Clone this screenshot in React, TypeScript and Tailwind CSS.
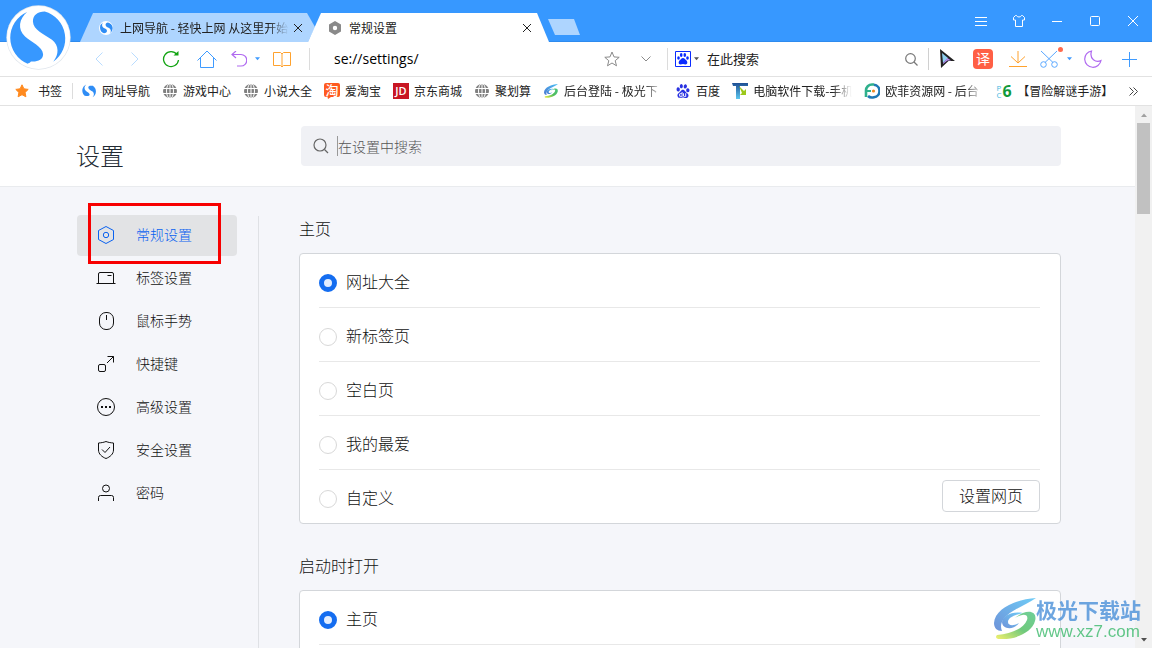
import type { ReactNode } from "react";
import clsx from "clsx";
import { SiBaidu } from "react-icons/si";

type IconProps = { className?: string };

const line = {
	fill: "none",
	stroke: "currentColor",
	strokeWidth: 1,
} as const;

function SogouLogo({ className }: IconProps) {
	return (
		<svg viewBox="16 16 198 198" className={className} aria-hidden="true">
			<circle cx="115" cy="115" r="98" fill="#dfe5ec" />
			<circle cx="115" cy="115" r="96" fill="#fff" />
			<g fill="#3798ff">
				<path d="M80 37C56 58 50 88 74 112C92 129 128 142 129 166C129 182 112 190 92 188C90 192 84 193 82 195A86 86 0 0 1 80 37Z" />
				<path d="M160 189C178 166 178 140 156 122C132 104 99 92 98 66C98 47 112 37 134 36A86 86 0 0 1 160 189Z" />
			</g>
		</svg>
	);
}

function SogouMark({ className }: IconProps) {
	return (
		<svg viewBox="27 27 176 176" className={className} aria-hidden="true">
			<g fill="#2f8df5">
				<path d="M80 32C56 58 50 88 74 112C92 129 122 140 123 160C123 178 102 184 60 174A86 86 0 0 1 80 32Z" />
				<path d="M160 195C182 166 182 140 160 122C136 104 107 92 106 70C106 52 124 44 164 50A86 86 0 0 1 160 195Z" />
			</g>
		</svg>
	);
}

function GlobeIcon({ className }: IconProps) {
	return (
		<svg viewBox="0 0 16 16" className={className} aria-hidden="true">
			<circle cx="8" cy="8" r="7" fill="#808080" />
			<g fill="none" stroke="#fff" strokeWidth="1">
				<path d="M8 1v14M1 5.5h14M1 10.5h14" />
				<ellipse cx="8" cy="8" rx="3.5" ry="7.5" />
			</g>
		</svg>
	);
}

function StarIcon({ className }: IconProps) {
	return (
		<svg viewBox="0 0 16 16" className={className} aria-hidden="true">
			<path
				fill="#ff8a1f"
				stroke="#ff8a1f"
				strokeLinejoin="round"
				d="M8 1.8l1.9 4 4.3.6-3.1 3 .8 4.4L8 11.7l-3.9 2.1.8-4.4-3.1-3 4.3-.6z"
			/>
		</svg>
	);
}

function TaoIcon({ className }: IconProps) {
	return (
		<svg viewBox="0 0 16 16" className={clsx("overflow-visible", className)} aria-hidden="true">
			<path fill="#ff5a1f" d="M2 0h12a2 2 0 0 1 2 2v10a2 2 0 0 1-2 2H7l-3 2-.5-2H2a2 2 0 0 1-2-2V2a2 2 0 0 1 2-2z" />
			<text x="8" y="11.5" textAnchor="middle" fontSize="13" fontWeight="500" fill="#fff">
				淘
			</text>
		</svg>
	);
}

function JdIcon({ className }: IconProps) {
	return (
		<svg viewBox="0 0 16 16" className={className} aria-hidden="true">
			<path fill="#c81623" d="M0 0h16v16H0z" />
			<text x="8" y="12" textAnchor="middle" fontSize="11" fill="#fff" fontFamily="Open Sans, sans-serif" fontWeight="600">
				JD
			</text>
		</svg>
	);
}

function SwirlIcon({ className }: IconProps) {
	return (
		<svg viewBox="0 0 42 42" className={className} aria-hidden="true">
			<defs>
				<linearGradient id="swirl-blue" x1="0" y1="1" x2="1" y2="0">
					<stop offset="0" stopColor="#4a78d0" />
					<stop offset="1" stopColor="#4cc0f5" />
				</linearGradient>
				<linearGradient id="swirl-green" x1="0" y1="1" x2="1" y2="0">
					<stop offset="0" stopColor="#f0ee4a" />
					<stop offset="0.5" stopColor="#4cbc5c" />
					<stop offset="1" stopColor="#4cc480" />
				</linearGradient>
			</defs>
			<path
				fill="url(#swirl-blue)"
				d="M42 0C23 1 1 10 0 25C0 30 3 33 8 33C5 26 9 19 19 13C27 8 35 5 42 0Z"
			/>
			<path
				fill="url(#swirl-blue)"
				d="M29 15C17 13 9 18 8 24C8 31 19 33 25 25C20 28 14 28 14 24C14 20 20 17 29 15Z"
			/>
			<path
				fill="url(#swirl-green)"
				d="M21 20C29 15 35 16 33 22C30 30 18 36 3 37C1 39 2 41 6 41C22 42 38 34 41 23C44 13 33 10 21 20Z"
			/>
		</svg>
	);
}

function TIcon({ className }: IconProps) {
	return (
		<svg viewBox="0 0 16 16" className={className} aria-hidden="true">
			<defs>
				<linearGradient id="t-bar" x1="0" y1="0" x2="0" y2="1">
					<stop offset="0" stopColor="#1f4f94" />
					<stop offset="1" stopColor="#5cc8f0" />
				</linearGradient>
			</defs>
			<path fill="url(#t-bar)" d="M0 0h16v3H8v13H4V3H1z" />
			<path fill="#9cc81a" d="M7 3l5 5 2-2v6H8l2-2z" />
		</svg>
	);
}

function OufeiIcon({ className }: IconProps) {
	return (
		<svg viewBox="0 0 16 16" className={className} aria-hidden="true">
			<g fill="none" strokeWidth="2.6">
				<path stroke="#2fb08c" d="M2 14V7.500A6 6 0 0 1 8 1.500h2" />
				<path stroke="#1f78b4" d="M10 1.700a6.300 6.300 0 0 1 0 12.500C7 15 5 14 4 13" />
				<path stroke="#2fb08c" strokeWidth="2" d="M3 8h4" />
			</g>
			<circle cx="9.500" cy="8" r="1.6" fill="#f08a24" />
		</svg>
	);
}

function Pc6Icon() {
	return (
		<span className="flex items-center gap-px font-['Open_Sans',sans-serif]" aria-hidden="true">
			<span className="flex flex-col text-[8px] leading-[7px] text-[#4ab8e0]">
				<span>P</span>
				<span>C</span>
			</span>
			<span className="text-base leading-4 font-bold text-[#119a3a]">6</span>
		</span>
	);
}

function PawIcon({ className }: IconProps) {
	return (
		<svg viewBox="0 0 16 16" className={className} aria-hidden="true">
			<path fill="none" stroke="#0a2bff" d="M.5.5h15v15H.5z" />
			<g fill="#0a2bff">
				<ellipse cx="3.500" cy="7" rx="1.300" ry="1.700" />
				<ellipse cx="6.200" cy="4" rx="1.300" ry="1.900" />
				<ellipse cx="9.800" cy="4" rx="1.300" ry="1.900" />
				<ellipse cx="12.500" cy="7" rx="1.300" ry="1.700" />
				<path d="M8 7c1.500 0 2 1.200 3.200 2.300 1.600 1.500 1.600 4.200-.7 4.200-1 0-1.500-.4-2.500-.4s-1.500.4-2.500.4c-2.300 0-2.300-2.700-.7-4.200C6 8.200 6.500 7 8 7z" />
			</g>
		</svg>
	);
}

function Caret({ className }: IconProps) {
	return (
		<svg viewBox="0 0 6 4" className={clsx("h-1", className)} aria-hidden="true">
			<path fill="currentColor" d="M0 0h6L3 3.500z" />
		</svg>
	);
}

function CloseIcon() {
	return (
		<svg viewBox="0 0 10 10" className="size-2.5" {...line}>
			<path d="M1 1l8 8M9 1L1 9" />
		</svg>
	);
}

function ToolButton({
	label,
	className,
	children,
}: {
	label: string;
	className?: string;
	children: ReactNode;
}) {
	return (
		<button
			type="button"
			aria-label={label}
			className={clsx("flex h-full shrink-0 items-center justify-center", className)}
		>
			{children}
		</button>
	);
}

function TitleBar() {
	return (
		<header className="flex h-[42px] shrink-0 items-end border-b border-[#2f8bee] bg-[#3798ff] pl-20">
			<div role="tablist" className="-mb-px flex items-end">
				<div className="flex h-[29px] w-[235px] items-center bg-[#aed5ff] pr-3 pl-[19px] [clip-path:polygon(13px_0,227px_0,235px_14px,228px_100%,0_100%)]">
					<svg viewBox="0 0 14 14" className="size-3.5 shrink-0" aria-hidden="true">
						<circle cx="7" cy="7" r="7" fill="#fff" />
						<path fill="#2f8df5" d="M4 1.500C2 4 3.500 6.500 6 7.600 9 9 8.500 12 5 12.300A6 6 0 0 1 4 1.500zM11 12.300C13 9.500 11 7.500 9 6.600 5.500 5 6 2 9 1.500a6 6 0 0 1 2 10.800z" />
					</svg>
					<button
						type="button"
						role="tab"
						aria-selected={false}
						className="ml-[7px] flex-1 text-left text-xs whitespace-nowrap [mask-image:linear-gradient(to_right,#000_88%,transparent)]"
					>
						上网导航 - 轻快上网 从这里开始
					</button>
					<button type="button" aria-label="关闭标签" className="ml-1">
						<CloseIcon />
					</button>
				</div>
				<div className="-ml-[7px] flex h-[29px] w-[241px] items-center bg-white pr-[17px] pl-5 [clip-path:polygon(13px_0,229px_0,241px_100%,0_100%)]">
					<svg viewBox="0 0 14 14" className="size-3.5 shrink-0" aria-hidden="true">
						<path fill="#8a8a8a" fillRule="evenodd" d="M7 0l6 3.500v7L7 14l-6-3.500v-7zM7 4.800a2.200 2.200 0 1 0 0 4.400 2.200 2.200 0 0 0 0-4.400z" />
					</svg>
					<button type="button" role="tab" aria-selected className="ml-[7px] flex-1 text-left text-xs">
						常规设置
					</button>
					<button type="button" aria-label="关闭标签">
						<CloseIcon />
					</button>
				</div>
			</div>
			<button
				type="button"
				aria-label="新建标签"
				className="mb-1.5 -ml-px h-4 w-8 bg-[#aed5ff] [clip-path:polygon(0_0,26px_0,100%_100%,7px_100%)]"
			/>
			<div className="ml-auto flex self-stretch text-white">
				<ToolButton label="菜单" className="w-[38px]">
					<svg viewBox="0 0 12 12" className="size-3" {...line}>
						<path d="M0 2.500h12M0 6.500h12M0 10.500h12" />
					</svg>
				</ToolButton>
				<ToolButton label="皮肤" className="w-[38px]">
					<svg viewBox="0 0 12 12" className="size-3" {...line}>
						<path d="M3.500.5c.5 2 4.500 2 5 0h1l2 2v2.500h-2v6.500h-7V5h-2V2.500l2-2z" />
					</svg>
				</ToolButton>
				<ToolButton label="最小化" className="w-[38px]">
					<svg viewBox="0 0 10 10" className="size-2.5" {...line}>
						<path d="M0 5.500h10" />
					</svg>
				</ToolButton>
				<ToolButton label="最大化" className="w-[38px]">
					<svg viewBox="0 0 10 10" className="size-2.5" {...line}>
						<rect x=".5" y=".5" width="9" height="9" rx="1" />
					</svg>
				</ToolButton>
				<ToolButton label="关闭" className="w-[38px]">
					<svg viewBox="0 0 10 10" className="size-2.5" {...line}>
						<path d="M0 0l10 10M10 0L0 10" />
					</svg>
				</ToolButton>
			</div>
		</header>
	);
}

function Toolbar() {
	return (
		<div className="flex h-[35px] shrink-0 items-center border-b border-[#e2e2e2] bg-white pl-[81px]">
			<ToolButton label="后退" className="w-9 text-[#b9dcff]">
				<svg viewBox="0 0 8 14" className="h-3.5 w-2" {...line}>
					<path d="M7.500.5L1 7l6.500 6.500" />
				</svg>
			</ToolButton>
			<ToolButton label="前进" className="w-9 text-[#b9dcff]">
				<svg viewBox="0 0 8 14" className="h-3.5 w-2" {...line}>
					<path d="M.5.5L7 7 .5 13.500" />
				</svg>
			</ToolButton>
			<ToolButton label="刷新" className="w-9 text-[#12a312]">
				<svg viewBox="0 0 18 18" className="size-[18px]" {...line} strokeWidth={1.3}>
					<path d="M15 4.500A7.500 7.500 0 1 0 16.500 10" />
					<path d="M16.500 1v4.500H11.500z" fill="currentColor" stroke="none" />
				</svg>
			</ToolButton>
			<ToolButton label="主页" className="w-9 text-[#3f9bff]">
				<svg viewBox="0 0 20 18" className="h-[18px] w-5" {...line}>
					<path d="M.5 10.500L10 1l9.500 9.500M3.500 8v9.500h13V8" />
				</svg>
			</ToolButton>
			<ToolButton label="恢复标签" className="w-7 text-[#b06af0]">
				<svg viewBox="0 0 16 16" className="size-4" {...line} strokeWidth={1.2}>
					<path d="M1 3.500h9a5.700 5.700 0 0 1 0 11.500H6" />
					<path d="M5 0L1 3.500 5 7" />
				</svg>
			</ToolButton>
			<Caret className="mx-0.5 w-[5px] text-[#3f9bff]" />
			<ToolButton label="阅读" className="w-10 text-[#ffa22e]">
				<svg viewBox="0 0 18 17" className="h-[17px] w-[18px]" {...line}>
					<path d="M.5 1.500h7L9 3l1.500-1.500h7v13h-7L9 16l-1.500-1.500h-7zM9 3v13" />
				</svg>
			</ToolButton>
			<div className="ml-[7px] h-[22px] w-px bg-[#dcdcdc]" />
			<input
				aria-label="地址栏"
				defaultValue="se://settings/"
				className="ml-6 min-w-0 flex-1 bg-transparent font-['Open_Sans','Noto_Sans_CJK_SC',sans-serif] text-sm text-black outline-none"
			/>
			<ToolButton label="收藏" className="w-9 text-[#8a8a8a]">
				<svg viewBox="0 0 16 16" className="size-4" {...line}>
					<path d="M8 1l2 4.900 5.200.4-4 3.400 1.300 5.100L8 12l-4.500 2.800 1.300-5.100-4-3.400L6 5.900z" />
				</svg>
			</ToolButton>
			<ToolButton label="展开地址" className="w-8 text-[#8a8a8a]">
				<svg viewBox="0 0 10 6" className="h-1.5 w-2.5" {...line}>
					<path d="M.5.5L5 5 9.500.5" />
				</svg>
			</ToolButton>
			<div className="ml-[5px] h-[22px] w-px bg-[#dcdcdc]" />
			<ToolButton label="搜索引擎" className="ml-[7px] gap-[3px]">
				<PawIcon className="size-4" />
				<Caret className="w-[5px] text-[#555]" />
			</ToolButton>
			<input
				aria-label="搜索"
				placeholder="在此搜索"
				className="ml-2 w-[187px] bg-transparent text-[13px] outline-none placeholder:text-[#222]"
			/>
			<ToolButton label="开始搜索" className="w-[34px] text-[#777]">
				<svg viewBox="0 0 13 13" className="size-[13px]" {...line} strokeWidth={1.2}>
					<circle cx="5.500" cy="5.500" r="4.800" />
					<path d="M9 9l3.500 3.500" />
				</svg>
			</ToolButton>
			<div className="h-[22px] w-px bg-[#d0d0d0]" />
			<ToolButton label="鼠标样式" className="w-9">
				<svg viewBox="0 0 16 20" className="h-5 w-4" aria-hidden="true">
					<path fill="#222" d="M1 0l15 12H9.500L2 19z" />
					<path fill="#8fd0f0" d="M3 4l6 5-5 5z" />
					<path fill="#b58af0" d="M8.500 9l3.500 2.500H8.500L4 15v-1z" />
				</svg>
			</ToolButton>
			<ToolButton label="翻译" className="w-9">
				<span className="flex size-5 items-center justify-center rounded-sm bg-[#ff5f45] pb-0.5 text-sm leading-5 text-white">
					译
				</span>
			</ToolButton>
			<ToolButton label="下载" className="w-[34px] text-[#ffa22e]">
				<svg viewBox="0 0 18 18" className="size-[18px]" {...line}>
					<path d="M9 1v12M2 6.500L9 13l7-6.500M0 16.500h18" />
				</svg>
			</ToolButton>
			<ToolButton label="截图" className="relative w-7 text-[#5aa8ff]">
				<svg viewBox="0 0 18 18" className="size-[18px]" {...line}>
					<path d="M1 1l12 11.500M17 1L5 12.500" />
					<circle cx="3.500" cy="14.500" r="2.800" />
					<circle cx="14.500" cy="14.500" r="2.800" />
				</svg>
				<span className="absolute top-[5px] right-0 size-[5px] rounded-full bg-[#ff6a4d]" />
			</ToolButton>
			<Caret className="ml-1 w-[5px] text-[#3f9bff]" />
			<ToolButton label="夜间模式" className="w-[42px] text-[#b06af0]">
				<svg viewBox="0 0 18 18" className="size-[18px]" {...line} strokeWidth={1.2}>
					<path d="M7.500 1A8.200 8.200 0 1 0 17 10.500C12 13 5 9 7.500 1z" />
				</svg>
			</ToolButton>
			<ToolButton label="添加" className="mr-[7px] w-[31px] text-[#3f9bff]">
				<svg viewBox="0 0 15 15" className="size-[15px]" {...line}>
					<path d="M7.500 0v15M0 7.500h15" />
				</svg>
			</ToolButton>
		</div>
	);
}

const BOOKMARKS = [
	{ label: "网址导航", icon: <SogouMark className="size-3.5" /> },
	{ label: "游戏中心", icon: <GlobeIcon className="size-4" /> },
	{ label: "小说大全", icon: <GlobeIcon className="size-4" /> },
	{ label: "爱淘宝", icon: <TaoIcon className="size-4" /> },
	{ label: "京东商城", icon: <JdIcon className="size-4" /> },
	{ label: "聚划算", icon: <GlobeIcon className="size-4" /> },
	{ label: "后台登陆 - 极光下", icon: <SwirlIcon className="size-3.5" /> },
	{ label: "百度", icon: <SiBaidu className="size-3.5 text-[#2932e1]" /> },
	{ label: "电脑软件下载-手机", icon: <TIcon className="size-4" /> },
	{ label: "欧菲资源网 - 后台", icon: <OufeiIcon className="size-4" /> },
	{ label: "【冒险解谜手游】", icon: <Pc6Icon /> },
];

function BookmarkBar() {
	return (
		<nav className="flex h-[29px] shrink-0 items-center border-b border-[#e2e2e2] bg-white pl-3.5 text-xs">
			<button type="button" className="flex items-center gap-2">
				<StarIcon className="size-4" />
				书签
			</button>
			<div className="mr-2 ml-[10px] h-4 w-px bg-[#dcdcdc]" />
			<ul className="flex min-w-0 flex-1 gap-3">
				{BOOKMARKS.map(({ label, icon }) => (
					<li key={label} className="shrink-0">
						<a href="#" className="flex items-center gap-[5px]">
							<span className="flex size-4 items-center justify-center">{icon}</span>
							<span
								className={clsx(
									"whitespace-nowrap",
									label.length > 8 &&
										"w-[99px] [mask-image:linear-gradient(to_right,#000_80%,transparent)]",
								)}
							>
								{label}
							</span>
						</a>
					</li>
				))}
			</ul>
			<ToolButton label="更多书签" className="w-[38px] text-[#444]">
				<svg viewBox="0 0 9 9" className="size-[9px]" {...line}>
					<path d="M.5.5l4 4-4 4M4.500.5l4 4-4 4" />
				</svg>
			</ToolButton>
		</nav>
	);
}

const MENU = [
	{
		label: "常规设置",
		icon: (
			<>
				<path d="M10 1.500l7.500 4v9l-7.500 4-7.500-4v-9z" strokeLinejoin="round" />
				<circle cx="10" cy="10" r="2.700" />
			</>
		),
	},
	{
		label: "标签设置",
		icon: <path d="M2.500 15.500V6a1.500 1.500 0 0 1 1.500-1.500h12A1.500 1.500 0 0 1 17.500 6v9.500M.5 15.500h19M11.500 7.500h4" />,
	},
	{
		label: "鼠标手势",
		icon: (
			<>
				<rect x="3.500" y="1.500" width="14" height="17" rx="6.500" />
				<path d="M10.500 4v5" />
			</>
		),
	},
	{
		label: "快捷键",
		icon: (
			<>
				<rect x="2.500" y="10.500" width="7" height="7" rx="1.500" />
				<path d="M11 9l6.500-6.500M11.500 2.500h6v6" />
			</>
		),
	},
	{
		label: "高级设置",
		icon: (
			<>
				<circle cx="10" cy="10" r="8.500" />
				<path d="M5 10h2M9 10h2M13 10h2" strokeWidth="2" />
			</>
		),
	},
	{
		label: "安全设置",
		icon: (
			<>
				<path d="M10 1.500c2.500 1 5 1.300 7.500 1.500v7c0 4-3.500 7-7.500 8.500C6 17 2.500 14 2.500 10V3C5 2.800 7.500 2.500 10 1.500z" />
				<path d="M6 9.500l3 3 5-5.500" />
			</>
		),
	},
	{
		label: "密码",
		icon: (
			<>
				<circle cx="10" cy="5.500" r="3.500" />
				<path d="M2.500 18v-3.500a2 2 0 0 1 2-2h11a2 2 0 0 1 2 2V18" />
			</>
		),
	},
];

function Sidebar() {
	return (
		<nav className="relative w-40 shrink-0 pt-7">
			<ul className="flex flex-col gap-0.5">
				{MENU.map(({ label, icon }, index) => (
					<li key={label}>
						<a
							href="#"
							className={clsx(
								"flex h-[41px] items-center gap-5 rounded-sm pb-0.5 pl-[19px] text-sm",
								index === 0 ? "bg-[#e2e3e5] text-[#0a62f0]" : "text-[#111]",
							)}
						>
							<svg viewBox="0 0 20 20" className="size-5" {...line}>
								{icon}
							</svg>
							<span className="pb-0.5">{label}</span>
						</a>
					</li>
				))}
			</ul>
			<div className="absolute top-4 left-[11px] h-[61px] w-[133px] border-[3px] border-[#f70000]" />
		</nav>
	);
}

function RadioCard({
	title,
	name,
	options,
	action,
}: {
	title: string;
	name: string;
	options: string[];
	action?: string;
}) {
	return (
		<fieldset>
			<legend className="mb-3.5 text-base leading-[22px]">{title}</legend>
			<div
				className={clsx(
					"rounded-sm border border-[#d3d6da] bg-white pr-5 pl-[19px]",
					!action && "pb-14",
				)}
			>
				{options.map((option, index) => (
					<div
						key={option}
						className={clsx(
							"flex h-[54px] items-start justify-between border-b border-[#e8e8e8]",
							action && "last:h-[53px] last:border-b-0",
						)}
					>
						<label className="flex items-center gap-[9px] pt-[15px] text-base">
							<input
								type="radio"
								name={name}
								defaultChecked={index === 0}
								className="size-[18px] appearance-none rounded-full border border-[#d8d8d8] bg-white checked:border-[5px] checked:border-[#146df0] checked:bg-[#e3eeff]"
							/>
							<span className="pb-1">{option}</span>
						</label>
						{action && index === options.length - 1 && (
							<button
								type="button"
								className="mt-2.5 h-8 rounded-sm border border-[#d3d6da] px-4 pb-0.5 text-base leading-6"
							>
								{action}
							</button>
						)}
					</div>
				))}
			</div>
		</fieldset>
	);
}

function SettingsPage() {
	return (
		<div className="flex min-w-0 flex-1 flex-col font-light text-[#111]">
			<div className="flex h-[81px] shrink-0 items-center border-b border-[#e9ebee] bg-white pr-[74px] pl-[76px]">
				<h1 className="w-[225px] pt-[18px] text-2xl font-light text-[#222a33]">设置</h1>
				<label className="flex h-10 flex-1 items-center rounded-sm bg-[#f0f1f5] pl-3 text-[#666]">
					<svg viewBox="0 0 16 16" className="size-4" {...line} strokeWidth={1.2}>
						<circle cx="7" cy="7" r="6" />
						<path d="M11.500 11.500L15 15" />
					</svg>
					<span className="ml-2 h-5 w-px bg-[#999]" />
					<input
						aria-label="搜索设置"
						placeholder="在设置中搜索"
						className="min-w-0 flex-1 bg-transparent text-sm outline-none placeholder:text-[#555]"
					/>
				</label>
			</div>
			<div className="flex min-h-0 flex-1 overflow-hidden bg-[#f5f6fa] pr-[74px] pl-[77px]">
				<Sidebar />
				<div className="mt-[29px] ml-[21px] w-px shrink-0 bg-[#dfe1e5]" />
				<main className="ml-10 flex min-w-0 flex-1 flex-col gap-[30px] pt-[30px]">
					<RadioCard
						title="主页"
						name="home"
						options={["网址大全", "新标签页", "空白页", "我的最爱", "自定义"]}
						action="设置网页"
					/>
					<RadioCard title="启动时打开" name="startup" options={["主页"]} />
				</main>
			</div>
		</div>
	);
}

function ScrollBar() {
	return (
		<div className="flex w-[17px] shrink-0 flex-col items-center bg-[#f1f1f1] text-[#505050]">
			<div className="flex h-[17px] items-center">
				<Caret className="w-2 rotate-180 text-[#a0a0a0]" />
			</div>
			<div className="h-[91px] w-[13px] bg-[#c1c1c1]" />
			<div className="mt-auto flex h-[17px] items-center">
				<Caret className="w-2" />
			</div>
		</div>
	);
}

function Watermark() {
	return (
		<div className="pointer-events-none absolute right-[11px] bottom-[5px] flex items-center opacity-80">
			<SwirlIcon className="mb-0.5 size-[42px]" />
			<div className="flex flex-col">
				<span className="text-[21px] leading-6 font-bold text-[#4a90d9]">极光下载站</span>
				<span className="font-['Liberation_Sans',sans-serif] text-[17px] leading-[22px] font-medium text-[#3cba6c]">
					www.xz7.com
				</span>
			</div>
		</div>
	);
}

export default function App() {
	return (
		<div className="relative flex h-screen flex-col overflow-hidden bg-white font-['Noto_Sans_CJK_SC',sans-serif] text-[#222]">
			<TitleBar />
			<Toolbar />
			<BookmarkBar />
			<div className="flex min-h-0 flex-1">
				<SettingsPage />
				<ScrollBar />
			</div>
			<SogouLogo className="absolute top-[5px] left-1.5 size-[65px]" />
			<Watermark />
		</div>
	);
}
